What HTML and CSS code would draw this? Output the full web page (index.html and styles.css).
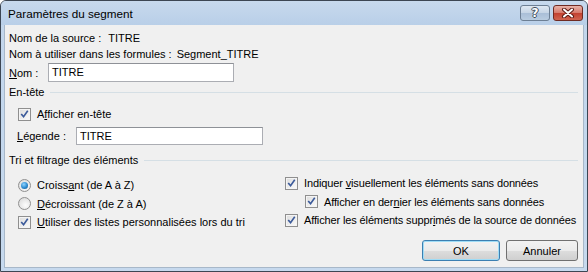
FILE: index.html
```html
<!DOCTYPE html>
<html lang="fr">

<head>
    <meta charset="UTF-8">
    <title>Paramètres du segment</title>
    <link rel="stylesheet" href="styles.css">
</head>

<body>
    <svg width="0" height="0" class="defs">
        <symbol id="chk" viewBox="0 0 13 13">
            <path d="M3.2 6.6 L5.4 9.2 L9.8 2.8" fill="none" stroke="#3b5a9a" stroke-width="1.9" stroke-linecap="square"/>
        </symbol>
    </svg>

    <div class="window">
        <div class="titlebar">
            <span class="title">Paramètres du segment</span>
            <div class="caption-btns">
                <span class="cap help">?</span>
                <span class="cap close">
                    <svg width="14" height="10" viewBox="0 0 14 10">
                        <path d="M3 1.5 L11 8.5 M11 1.5 L3 8.5" stroke="#5a1a14" stroke-width="4" stroke-linecap="round"/>
                        <path d="M3 1.5 L11 8.5 M11 1.5 L3 8.5" stroke="#ffffff" stroke-width="2" stroke-linecap="round"/>
                    </svg>
                </span>
            </div>
        </div>

        <div class="client">
            <div class="info-row">
                <span>Nom de la source :</span>
                <span class="value">TITRE</span>
            </div>
            <div class="info-row">
                <span>Nom à utiliser dans les formules :</span>
                <span class="value">Segment_TITRE</span>
            </div>

            <div class="field-row name-row">
                <label class="name-label"><u>N</u>om :</label>
                <div class="textbox name-box">TITRE</div>
            </div>

            <div class="group-title"><span>En-tête</span><span class="rule"></span></div>

            <div class="check-row indent top-gap">
                <span class="checkbox"><svg><use href="#chk"/></svg></span>
                <span>A<u>f</u>ficher en-tête</span>
            </div>

            <div class="field-row caption-row">
                <label class="caption-label"><u>L</u>égende :</label>
                <div class="textbox caption-box">TITRE</div>
            </div>

            <div class="group-title sort-title"><span>Tri et filtrage des éléments</span><span class="rule"></span></div>

            <div class="options">
                <div class="col left-col">
                    <div class="check-row">
                        <span class="radio checked"></span>
                        <span>Croiss<u>a</u>nt (de A à Z)</span>
                    </div>
                    <div class="check-row">
                        <span class="radio"></span>
                        <span><u>D</u>écroissant (de Z à A)</span>
                    </div>
                    <div class="check-row">
                        <span class="checkbox"><svg><use href="#chk"/></svg></span>
                        <span><u>U</u>tiliser des listes personnalisées lors du tri</span>
                    </div>
                </div>
                <div class="col right-col">
                    <div class="check-row">
                        <span class="checkbox"><svg><use href="#chk"/></svg></span>
                        <span>Indiquer <u>v</u>isuellement les éléments sans données</span>
                    </div>
                    <div class="check-row sub">
                        <span class="checkbox"><svg><use href="#chk"/></svg></span>
                        <span>Afficher en der<u>n</u>ier les éléments sans données</span>
                    </div>
                    <div class="check-row">
                        <span class="checkbox"><svg><use href="#chk"/></svg></span>
                        <span>Afficher les éléments suppr<u>i</u>més de la source de données</span>
                    </div>
                </div>
            </div>

            <div class="footer">
                <span class="btn default">OK</span>
                <span class="btn cancel">Annuler</span>
            </div>
        </div>
    </div>
</body>

</html>
```

FILE: styles.css
```css
* {
    box-sizing: border-box;
}

body {
    margin: 0;
    font-family: "Liberation Sans", Arial, sans-serif;
    font-size: 11px;
    color: #000;
    background: #ffffff;
}

.defs {
    position: absolute;
}

.window {
    width: 588px;
    height: 272px;
    border: 1px solid #3c4653;
    border-radius: 6px 6px 0 0;
    background: linear-gradient(to bottom, #c2d6ec, #c6d9ee);
    display: flex;
    flex-direction: column;
}

.titlebar {
    height: 24px;
    display: flex;
    align-items: center;
    justify-content: space-between;
    padding-left: 7px;
    padding-right: 4px;
    background: linear-gradient(to bottom, #c7d9ed, #b9cfe8);
    border-radius: 5px 5px 0 0;
}

.title {
    font-size: 11.7px;
    padding-top: 1px;
}

.caption-btns {
    display: flex;
    gap: 3px;
    align-self: flex-start;
    margin-top: 4px;
}

.cap {
    width: 30px;
    height: 16px;
    border: 1px solid #6d7f94;
    border-radius: 3px;
    display: flex;
    align-items: center;
    justify-content: center;
}

.help {
    background: linear-gradient(to bottom, #dfe8f2 0%, #c5d4e5 50%, #a9bed7 51%, #b9cce0 100%);
    color: #fff;
    font-family: "DejaVu Sans", sans-serif;
    font-weight: bold;
    font-size: 12px;
    text-shadow: -1px 0 #3f4d5d, 1px 0 #3f4d5d, 0 -1px #3f4d5d, 0 1px #3f4d5d;
}

.close {
    border-color: #6f2a22;
    background: linear-gradient(to bottom, #e8b3a8 0%, #d6786a 50%, #c2402f 51%, #d06450 100%);
}

.client {
    flex: 1;
    margin: 0 3px 3px 3px;
    background: #f0f0f0;
    border: 1px solid #a8b8c9;
    border-top: none;
    padding: 5px 5px 6px 4px;
    display: flex;
    flex-direction: column;
    white-space: nowrap;
}

.info-row {
    height: 16px;
    line-height: 16px;
    display: flex;
    gap: 7px;
}

.info-row + .info-row {
    gap: 5px;
}

.field-row {
    display: flex;
    align-items: center;
}

.name-row {
    margin-top: 1px;
}

.name-label {
    width: 39px;
}

.textbox {
    height: 19px;
    border: 1px solid #abadb3;
    border-top-color: #8e9197;
    background: #fff;
    padding-left: 3px;
    line-height: 17px;
}

.name-box {
    width: 186px;
}

.caption-row {
    margin-top: 5px;
    padding-left: 8px;
}

.caption-label {
    width: 59px;
}

.caption-box {
    width: 187px;
    height: 18px;
    line-height: 16px;
}

.group-title {
    height: 16px;
    line-height: 16px;
    margin-top: 2px;
    display: flex;
    align-items: center;
}

.rule {
    flex: 1;
    border-top: 1px solid #d5dfe5;
    margin-left: 6px;
    margin-top: 1px;
}

.sort-title {
    margin-top: 7px;
}

.check-row {
    height: 18.5px;
    display: flex;
    align-items: center;
    gap: 6px;
}

.indent {
    padding-left: 9px;
}

.top-gap {
    margin-top: 6px;
    height: 16px;
}

.checkbox {
    width: 13px;
    height: 13px;
    border: 1px solid #8f8f8f;
    background: linear-gradient(135deg, #dcdcdc, #fbfbfb);
    box-shadow: inset 0 0 0 1px #f4f4f4;
    flex: none;
}

.checkbox svg {
    width: 11px;
    height: 11px;
    display: block;
}

.radio {
    width: 13px;
    height: 13px;
    border-radius: 50%;
    border: 1px solid #909090;
    background: radial-gradient(circle at 60% 65%, #fdfdfd, #d6d6d6);
    flex: none;
    position: relative;
}

.radio.checked::after {
    content: '';
    position: absolute;
    left: 2px;
    top: 2px;
    width: 7px;
    height: 7px;
    border-radius: 50%;
    background: radial-gradient(circle at 40% 35%, #8fd4ff, #2b8ad0 55%, #174f80);
}

.options {
    display: flex;
    padding-left: 9px;
}

.left-col {
    width: 267px;
    flex: none;
    margin-top: 8px;
}

.right-col {
    margin-top: 6px;
    letter-spacing: -0.13px;
}

.sub {
    padding-left: 20px;
}

.footer {
    margin-top: auto;
    display: flex;
    justify-content: flex-end;
    gap: 6px;
}

.btn {
    height: 21px;
    border: 1px solid #707070;
    border-radius: 3px;
    background: linear-gradient(to bottom, #f2f2f2 0%, #ebebeb 50%, #dddddd 51%, #cfcfcf 100%);
    display: flex;
    align-items: center;
    justify-content: center;
}

.default {
    width: 78px;
    border-color: #3c7fb1;
    box-shadow: inset 0 0 0 1px #9fdcf6;
}

.cancel {
    width: 72px;
}
```
